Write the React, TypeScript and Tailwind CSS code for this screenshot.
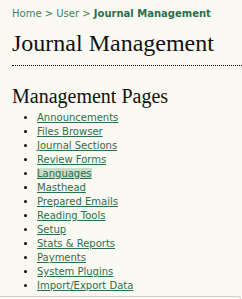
const pages = [
  'Announcements',
  'Files Browser',
  'Journal Sections',
  'Review Forms',
  'Languages',
  'Masthead',
  'Prepared Emails',
  'Reading Tools',
  'Setup',
  'Stats & Reports',
  'Payments',
  'System Plugins',
  'Import/Export Data',
];

const sans = { fontFamily: '"DejaVu Sans", Verdana, sans-serif' };
const serif = { fontFamily: '"Liberation Serif", Georgia, serif' };

export default function App() {
  return (
    <div className="w-[242px] h-[299px] overflow-hidden bg-[#fbfaf2]">
      <div className="pl-3 pt-[8px]">
        {/* Breadcrumb */}
        <div className="text-[10px] leading-[12px] text-[#3b7d60]" style={sans}>
          <a>Home</a> &gt; <a>User</a> &gt;{' '}
          <a className="font-bold text-[#2a6e4f]">Journal Management</a>
        </div>

        <h2 className="mt-[8px] text-[24px] leading-[30px] text-[#111] whitespace-nowrap" style={serif}>
          Journal Management
        </h2>
        <div className="mt-[7px] border-b border-dotted border-black" />

        <h3 className="mt-[18px] text-[20px] leading-[24px] text-[#111] whitespace-nowrap" style={serif}>
          Management Pages
        </h3>

        <ul className="mt-[3px] pl-[25px] list-disc text-[10px] leading-[14px]" style={sans}>
          {pages.map((p) => (
            <li key={p} className="marker:text-black">
              <a className={`underline text-[#2b6e50] ${p === 'Languages' ? 'bg-[#c9dcc9]' : ''}`}>{p}</a>
            </li>
          ))}
        </ul>
      </div>
      <div className="mt-[3px] h-4 border-t border-r border-[#cfcfcf] rounded-tr-[3px] w-[241px]" />
    </div>
  );
}
